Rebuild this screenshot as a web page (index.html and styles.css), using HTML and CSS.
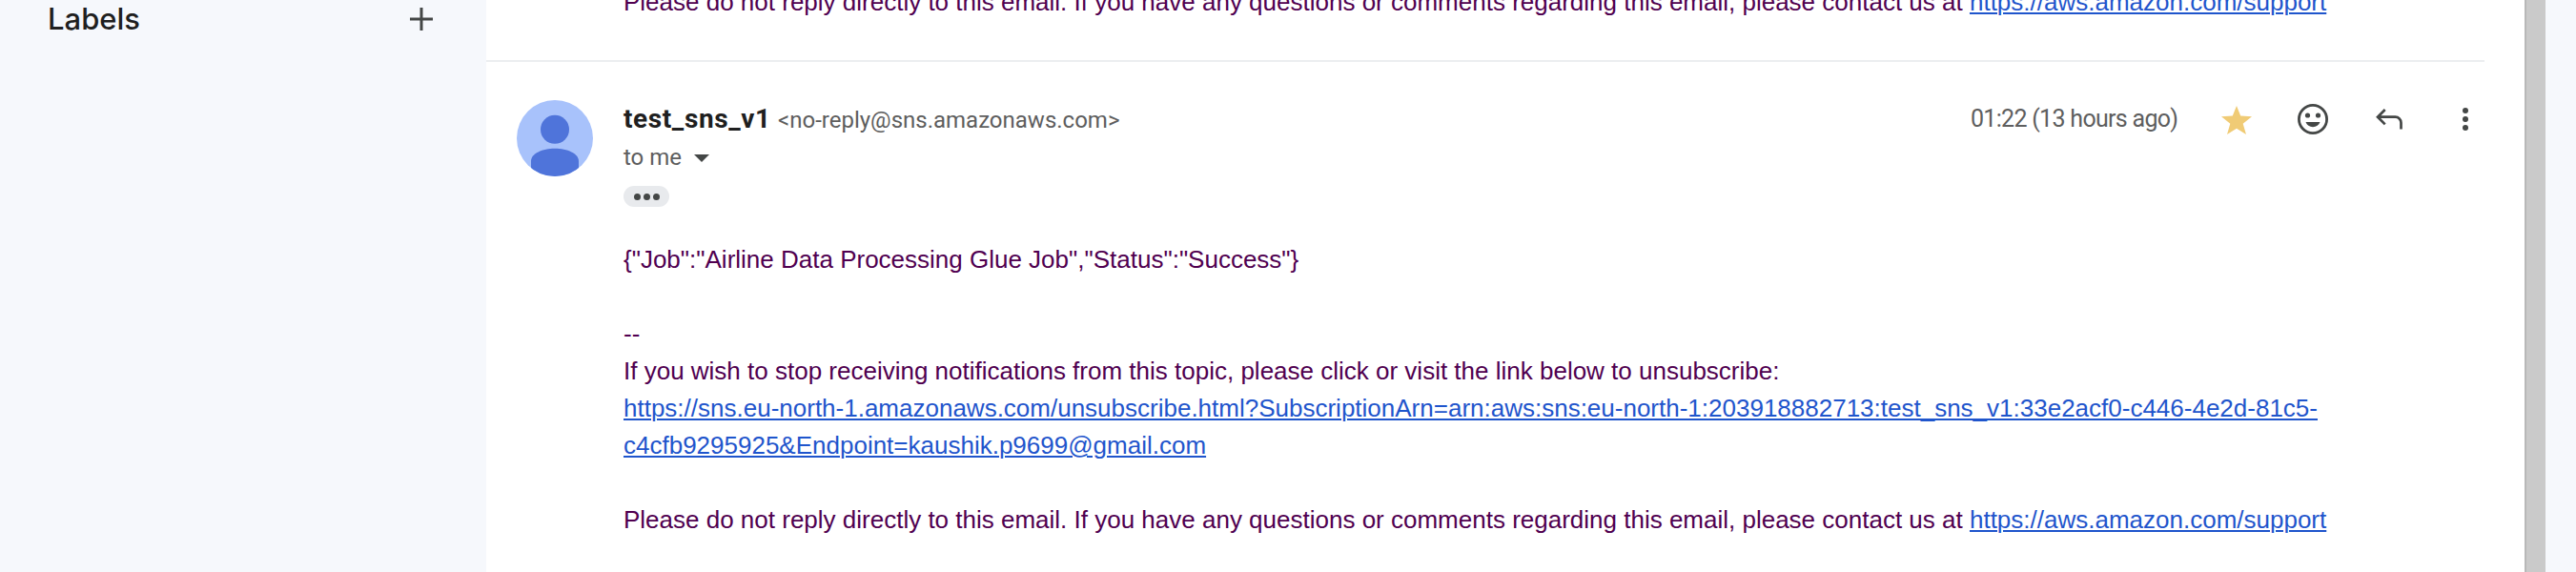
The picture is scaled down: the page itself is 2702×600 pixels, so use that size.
FILE: index.html
```html
<!DOCTYPE html>
<html lang="en">
<head>
<meta charset="utf-8">
<title>Mail</title>
<link rel="stylesheet" href="styles.css">
</head>
<body>
<div class="app">
  <aside class="sidebar">
    <span class="labels">Labels</span>
    <svg class="plus" width="24" height="24" viewBox="0 0 24 24"><path d="M12 0v24M0 12h24" stroke="#444746" stroke-width="3"/></svg>
  </aside>
  <main class="thread">
    <section class="previous">
      <p class="line">Please do not reply directly to this email. If you have any questions or comments regarding this email, please contact us at <a href="#">https://aws.amazon.com/support</a></p>
    </section>
    <article class="message">
      <svg class="avatar" width="80" height="80" viewBox="0 0 80 80">
        <defs><clipPath id="disc"><circle cx="40" cy="40" r="40"/></clipPath></defs>
        <g clip-path="url(#disc)">
          <path fill="#a8c2fb" d="M0 0h80v80H0z"/>
          <circle cx="40" cy="30.800" r="15" fill="#4f74da"/>
          <path fill="#4f74da" d="M15 80V64c0-8 12-13.300 25-13.300S65 56 65 64v16z"/>
        </g>
      </svg>
      <div class="content">
        <header class="head">
          <div class="sender"><span class="name">test_sns_v1</span><span class="address">&lt;no-reply@sns.amazonaws.com&gt;</span></div>
          <div class="tools">
            <span class="date">01:22 (13 hours ago)</span>
            <svg class="star" width="32" height="30" viewBox="0 0 32 30"><path fill="#f0cb75" d="M16 0l4.200 10.500L32 11.300l-9.300 7.400L26 30l-10-6.200L6 30l3.300-11.300L0 11.300l11.800-.8z"/></svg>
            <svg class="smile" width="32" height="32" viewBox="0 0 32 32"><circle cx="16" cy="16" r="14.600" fill="none" stroke="#444746" stroke-width="2.800"/><circle cx="10.500" cy="12" r="2.600" fill="#444746"/><circle cx="21.500" cy="12" r="2.600" fill="#444746"/><path fill="#444746" d="M8.500 19h15c-1.200 3.200-4 5.200-7.500 5.200S9.700 22.200 8.500 19z"/></svg>
            <svg class="reply" width="28" height="22" viewBox="0 0 28 22"><path fill="none" stroke="#444746" stroke-width="2.700" d="M9.700 1L2 8.700l7.700 7.700M2 8.700h18.500a6 6 0 0 1 6 6V21.500"/></svg>
            <svg class="more" width="6" height="24" viewBox="0 0 6 24" fill="#444746"><circle cx="3" cy="3" r="3"/><circle cx="3" cy="12" r="3"/><circle cx="3" cy="21" r="3"/></svg>
          </div>
        </header>
        <div class="to"><span class="me">to me</span><svg class="caret" width="16" height="8" viewBox="0 0 16 8"><path fill="#444746" d="M0 0h16L8 8z"/></svg></div>
        <div class="pill"><i></i><i></i><i></i></div>
        <div class="body">
          <p class="line job">{"Job":"Airline Data Processing Glue Job","Status":"Success"}</p>
          <p class="line">--</p>
          <p class="line">If you wish to stop receiving notifications from this topic, please click or visit the link below to unsubscribe:</p>
          <p class="line gap"><a href="#">https://sns.eu-north-1.amazonaws.com/unsubscribe.html?SubscriptionArn=arn:aws:sns:eu-north-1:203918882713:test_sns_v1:33e2acf0-c446-4e2d-81c5-<br>c4cfb9295925&amp;Endpoint=kaushik.p9699@gmail.com</a></p>
          <p class="line">Please do not reply directly to this email. If you have any questions or comments regarding this email, please contact us at <a href="#">https://aws.amazon.com/support</a></p>
        </div>
      </div>
    </article>
  </main>
  <div class="scrollbar"></div>
</div>
</body>
</html>
```
FILE: styles.css
```css
* { box-sizing: border-box; }
body { margin: 0; background: #f6f8fc; }
p { margin: 0; }
svg { display: block; flex: none; }
.app { display: flex; width: 2702px; height: 600px; overflow: hidden; font-family: "Liberation Sans", Arial, sans-serif; }
.sidebar { display: flex; flex: none; justify-content: space-between; align-items: flex-start; width: 510px; padding: 8px 56px 0 50px; }
.labels { margin-top: -8px; font: 500 31px/40px Inter, sans-serif; color: #1f1f1f; }
.thread { flex: none; width: 2138px; background: #fff; }
.previous { display: flow-root; width: 2096px; height: 65px; padding-left: 144px; border-bottom: 2px solid #eceef0; }
.previous .line { margin-top: -17px; }
.line { font-size: 26px; line-height: 39px; color: #500050; white-space: nowrap; }
.line a { color: #1f55cc; text-decoration: underline; text-decoration-thickness: 2px; text-underline-offset: 2px; }
.message { display: flex; padding-left: 32px; }
.avatar { margin-top: 40px; }
.content { width: 1984px; padding: 40px 0 0 32px; }
.head { display: flex; justify-content: space-between; height: 40px; font-family: Roboto, sans-serif; }
.sender { display: flex; align-items: baseline; height: 40px; line-height: 40px; }
.name { width: 162px; font-size: 28px; font-weight: 700; letter-spacing: 0.600px; color: #1f1f1f; }
.address, .date, .me { font-size: 24px; line-height: 40px; color: #5e5e5e; }
.tools { display: flex; align-items: center; height: 40px; }
.date { width: 263px; font-size: 25px; letter-spacing: -0.700px; }
.star { margin-top: 2px; }
.smile { margin-left: 48px; }
.reply { margin-left: 50px; }
.more { margin-left: 63px; margin-right: 17px; }
.to { display: flex; align-items: center; height: 40px; font-family: Roboto, sans-serif; }
.me { width: 74px; }
.caret { margin-top: 2px; }
.pill { display: flex; justify-content: center; align-items: center; gap: 3px; width: 48px; height: 22px; margin-top: 10px; border-radius: 11px; background: #e8eaed; }
.pill i { width: 7px; height: 7px; border-radius: 50%; background: #444746; }
.body { padding-top: 36px; }
.job, .gap { margin-bottom: 39px; }
.scrollbar { flex: none; width: 22px; background: #cacaca; border-left: 2px solid #b8b8b8; }
```
